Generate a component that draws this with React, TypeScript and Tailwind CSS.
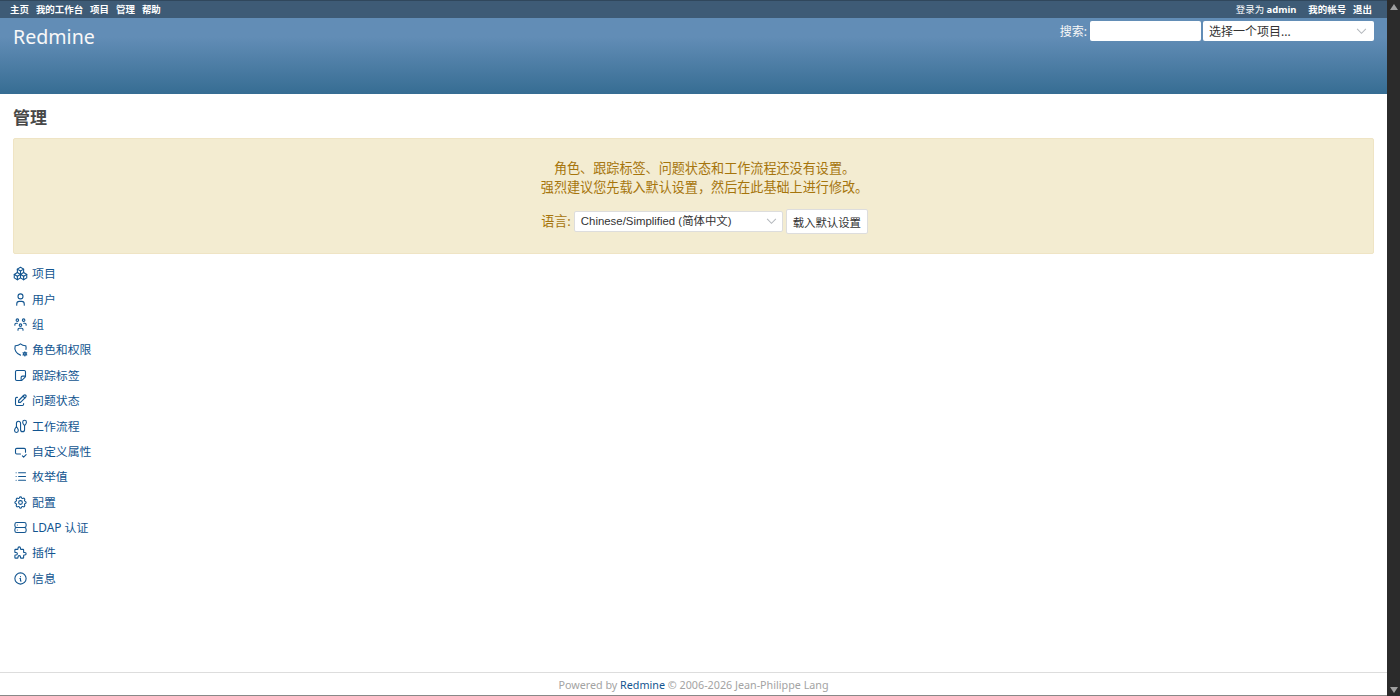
import React from 'react';
import {
  TbPackages, TbUser, TbUsersGroup, TbShieldCog, TbSticker2, TbEdit,
  TbInputCheck, TbList, TbSettings, TbServer, TbPuzzle, TbInfoCircle
} from 'react-icons/tb';

// Winding path between two pins
const WorkflowIcon: React.FC<{ className?: string }> = ({ className }) => (
  <svg
    viewBox="0 0 24 24"
    fill="none"
    stroke="currentColor"
    strokeWidth="2"
    strokeLinecap="round"
    strokeLinejoin="round"
    className={className}
  >
    <path d="M2.500 18.500c0-2.500 3-6.500 3-6.500s3 4 3 6.500a3 3 0 0 1-6 0" />
    <path d="M15.500 5c0 2.500 3 5.500 3 5.500s3-3 3-5.500a3 3 0 0 0-6 0" />
    <path d="M5.500 12v-5a3.300 3.300 0 0 1 6.600 0v10a3.200 3.200 0 0 0 6.400 0v-6.500" />
  </svg>
);

const topLinks = ['主页', '我的工作台', '项目', '管理', '帮助'];

const adminMenu = [
  { label: '项目', icon: TbPackages },
  { label: '用户', icon: TbUser },
  { label: '组', icon: TbUsersGroup },
  { label: '角色和权限', icon: TbShieldCog },
  { label: '跟踪标签', icon: TbSticker2 },
  { label: '问题状态', icon: TbEdit },
  { label: '工作流程', icon: WorkflowIcon },
  { label: '自定义属性', icon: TbInputCheck },
  { label: '枚举值', icon: TbList },
  { label: '配置', icon: TbSettings },
  { label: 'LDAP 认证', icon: TbServer },
  { label: '插件', icon: TbPuzzle },
  { label: '信息', icon: TbInfoCircle },
];

const Chevron: React.FC = () => (
  <svg viewBox="0 0 12 8" className="w-[11px] h-[7px] shrink-0" fill="none" stroke="#b4b8bd" strokeWidth="1.200">
    <path d="M1 1l5 5l5-5" />
  </svg>
);

const TopMenu: React.FC = () => (
  <nav className="h-[18px] shrink-0 bg-[#3e5b76] border-t border-[#30475c] pl-[10px] pr-[15px] flex items-center justify-between text-white text-[9.450px] leading-[17px]">
    <div className="flex gap-[7px] font-bold">
      {topLinks.map((link) => (
        <a key={link} href="#">{link}</a>
      ))}
    </div>
    <div className="flex">
      <span className="mr-[12px]">登录为 <a href="#" className="font-bold">admin</a></span>
      <a href="#" className="font-bold mr-[7px]">我的帐号</a>
      <a href="#" className="font-bold">退出</a>
    </div>
  </nav>
);

const Header: React.FC = () => (
  <header className="h-[76px] shrink-0 bg-linear-to-b from-[#628db6] from-25% to-[#366d93] pl-[13px] pr-[13px] flex justify-between items-start text-[#f8f8f8]">
    <h1 className="text-[19.600px] leading-[27px] mt-[5px]">Redmine</h1>
    <div className="flex items-center mt-[3px] text-[12px]">
      <label className="mr-[3px] pt-[2px] leading-[18px]">搜索:</label>
      <input type="text" className="w-[111px] h-[20px] bg-white rounded-[2px] mr-[2px]" />
      <button className="w-[171px] h-[20px] bg-white rounded-[2px] pl-[6px] pr-[7px] flex items-center justify-between text-[#333]">
        <span className="pt-[2px] leading-[18px]">选择一个项目...</span>
        <Chevron />
      </button>
    </div>
  </header>
);

const DefaultDataNotice: React.FC = () => (
  <div className="h-[116px] bg-[#f3ecd1] border border-[#efe4c4] rounded-[2px] text-[#a6750c] text-[13.100px] leading-[19px] pt-[20px] pl-[22px] flex flex-col items-center">
    <p>角色、跟踪标签、问题状态和工作流程还没有设置。</p>
    <p>强烈建议您先载入默认设置，然后在此基础上进行修改。</p>
    <div className="flex items-center mt-[12px]">
      <label className="mr-[3px] pb-[1px]">语言:</label>
      <button className="w-[209px] h-[21px] bg-white border border-[#ddd] rounded-[2px] pl-[6px] pr-[5px] mr-[3px] flex items-center justify-between text-[#333] text-[11.400px] font-['Liberation_Sans','Noto_Sans_CJK_SC',sans-serif]">
        <span>Chinese/Simplified (简体中文)</span>
        <Chevron />
      </button>
      <button className="w-[82px] h-[25px] bg-white border border-[#ddd] rounded-[2px] text-[#333] text-[11.400px] text-center pt-[1px]">
        载入默认设置
      </button>
    </div>
  </div>
);

export default function App() {
  return (
    <div className="h-screen flex overflow-hidden bg-white font-['Noto_Sans','Noto_Sans_CJK_SC',sans-serif]">
      <div className="flex-1 flex flex-col border-b border-[#888]">
        <TopMenu />
        <Header />
        <main className="flex-1 px-[13px] pt-[11px]">
          <h2 className="text-[17px] leading-[25px] font-bold text-[#484848] mb-[8px]">管理</h2>
          <DefaultDataNotice />
          <ul className="mt-[7px]">
            {adminMenu.map(({ label, icon: Icon }) => (
              <li key={label} className="h-[25.400px] flex items-center">
                <a href="#" className="flex items-center text-[#125590] text-[11.900px] leading-[18px]">
                  <Icon className="w-[15px] h-[15px] mr-[4px] stroke-[1.750]" />
                  <span className="pb-[1px]">{label}</span>
                </a>
              </li>
            ))}
          </ul>
        </main>
        <footer className="h-[23px] shrink-0 border-t border-[#ddd] text-center text-[10.750px] leading-[24px] text-[#a3a3a3]">
          Powered by <a href="#" className="text-[#125590]">Redmine</a> © 2006-2026 Jean-Philippe Lang
        </footer>
      </div>

      {/* Scrollbar */}
      <div className="w-[13px] shrink-0 bg-[#2b2b2b] flex flex-col items-center justify-between pt-[4px] pb-[3px]">
        <svg viewBox="0 0 8 6" className="w-[8px] h-[6px]" fill="#9f9f9f"><path d="M4 0l4 6h-8z" /></svg>
        <svg viewBox="0 0 8 6" className="w-[8px] h-[6px]" fill="#9f9f9f"><path d="M0 0h8l-4 6z" /></svg>
      </div>
    </div>
  );
}
